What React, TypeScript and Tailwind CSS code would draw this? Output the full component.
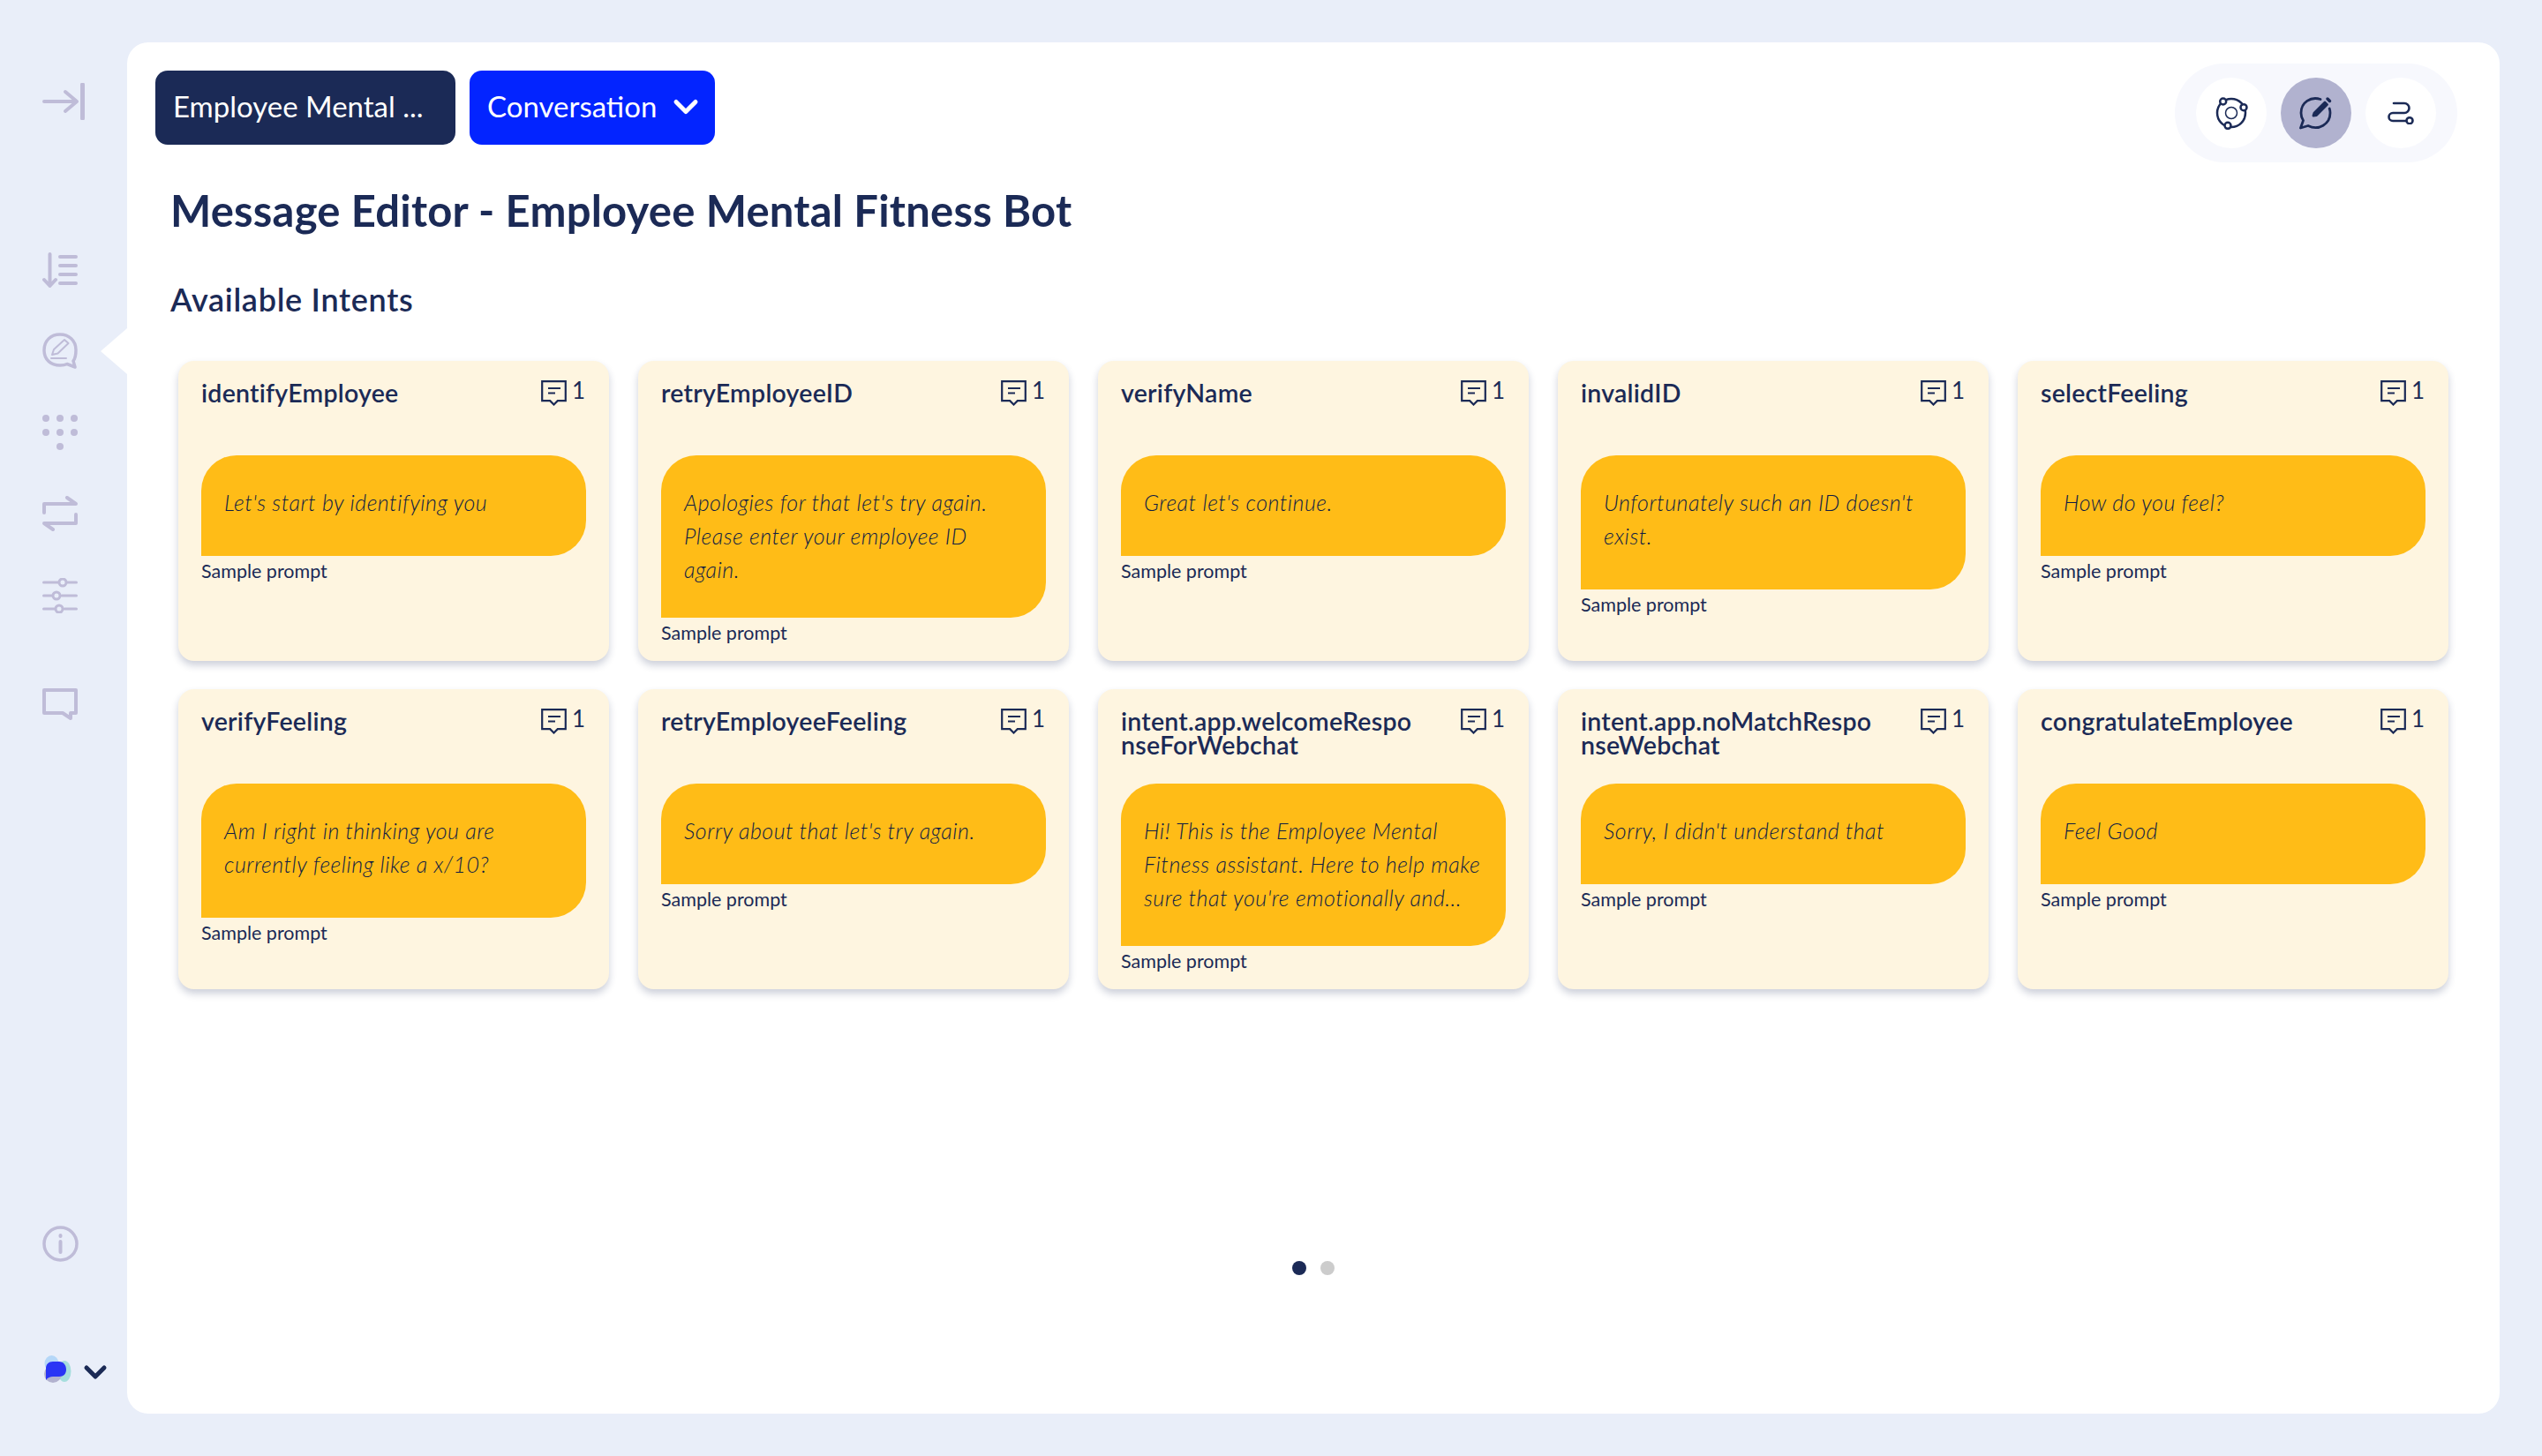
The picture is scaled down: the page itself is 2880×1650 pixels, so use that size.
import { ChevronDown } from "lucide-react";

const intents = [
  { name: "identifyEmployee", text: ["Let's start by identifying you"] },
  { name: "retryEmployeeID", text: ["Apologies for that let's try again.", "Please enter your employee ID", "again."] },
  { name: "verifyName", text: ["Great let's continue."] },
  { name: "invalidID", text: ["Unfortunately such an ID doesn't", "exist."] },
  { name: "selectFeeling", text: ["How do you feel?"] },
  { name: "verifyFeeling", text: ["Am I right in thinking you are", "currently feeling like a x/10?"] },
  { name: "retryEmployeeFeeling", text: ["Sorry about that let's try again."] },
  {
    name: "intent.app.welcomeResponseForWebchat",
    text: ["Hi! This is the Employee Mental", "Fitness assistant. Here to help make", "sure that you're emotionally and..."],
  },
  { name: "intent.app.noMatchResponseWebchat", text: ["Sorry, I didn't understand that"] },
  { name: "congratulateEmployee", text: ["Feel Good"] },
];

function CollapseIcon() {
  return (
    <svg width="48" height="42" viewBox="0 0 48 42" fill="none" stroke="#bfbcd8" strokeWidth="4" strokeLinecap="round" strokeLinejoin="round">
      <path d="M2 21h36M26 10l13 11-13 11" />
      <path d="M45.500 2v38" strokeWidth="5" />
    </svg>
  );
}

function ListIcon() {
  return (
    <svg width="40" height="41" viewBox="0 0 40 41" fill="none" stroke="#bfbcd8" strokeWidth="4" strokeLinecap="round" strokeLinejoin="round">
      <path d="M8.500 2v36M2 31l6.500 7 6.500-7" />
      <path d="M20 5h18M20 15h18M20 25h18M20 35h18" />
    </svg>
  );
}

function ChatEditIcon() {
  return (
    <svg width="40" height="41" viewBox="0 0 40 41" fill="none" stroke="#bfbcd8" strokeWidth="3.500" strokeLinecap="round" strokeLinejoin="round">
      <path d="M20 2C9.500 2 2 9 2 20s8 17 18 17c3 0 6-.5 8-1.500l9 3.500-2-7c2.500-3 3-7 3-12.500C38 9 30 2 20 2Z" />
      <path d="M11 25l2-6 12-11 4.500 4-12 11.500-6.500 1.500Z" strokeWidth="2" />
      <path d="M10 29h17" strokeWidth="2" />
    </svg>
  );
}

function DotsIcon() {
  return (
    <svg width="40" height="40" viewBox="0 0 40 40" fill="#bfbcd8">
      <ellipse cx="4" cy="4" rx="4" ry="4" />
      <ellipse cx="20" cy="4" rx="4" ry="4" />
      <ellipse cx="36" cy="4" rx="4" ry="4" />
      <ellipse cx="4" cy="20" rx="4" ry="4" />
      <ellipse cx="20" cy="20" rx="4" ry="4" />
      <ellipse cx="36" cy="20" rx="4" ry="4" />
      <ellipse cx="20" cy="36" rx="4" ry="4" />
    </svg>
  );
}

function RepeatIcon() {
  return (
    <svg width="40" height="40" viewBox="0 0 40 40" fill="none" stroke="#bfbcd8" strokeWidth="4" strokeLinecap="round" strokeLinejoin="round">
      <path d="M2 19V9h36L28 2" />
      <path d="M38 21v10H2l10 7" />
    </svg>
  );
}

function SlidersIcon() {
  return (
    <svg width="40" height="40" viewBox="0 0 40 40" fill="none" stroke="#bfbcd8" strokeWidth="3" strokeLinecap="round">
      <path d="M1.500 5h17M28 5h10.500M1.500 20h10M22 20h16.500M1.500 35h13M25 35h13.500" />
      <circle cx="23" cy="5" r="4" />
      <circle cx="16" cy="20" r="4" />
      <circle cx="19" cy="35" r="4" />
    </svg>
  );
}

function ChatIcon() {
  return (
    <svg width="40" height="37" viewBox="0 0 40 37" fill="none" stroke="#bfbcd8" strokeWidth="4" strokeLinejoin="round">
      <path d="M2 2h36v26h-6v6l-9-6H2V2Z" />
    </svg>
  );
}

function InfoIcon() {
  return (
    <svg width="41" height="41" viewBox="0 0 41 41" fill="none" stroke="#bfbcd8" strokeWidth="3.500" strokeLinecap="round">
      <circle cx="20.500" cy="20.500" r="18.500" />
      <path d="M20.500 18v12" strokeWidth="4" />
      <path d="M20.500 11v1" strokeWidth="4" />
    </svg>
  );
}

function BlobLogo() {
  return (
    <svg width="32" height="32" viewBox="0 0 32 32">
      <ellipse cx="9.500" cy="9" rx="8" ry="9" fill="#b5d7f8" />
      <ellipse cx="24" cy="18" rx="7.500" ry="12" fill="#a6dedd" />
      <circle cx="11" cy="21" r="10" fill="#b2b2cf" />
      <path d="M3 15C3 10 6 7 11 7h7c5 0 8 4 8 9s-3 8-8 8h-7c-3 0-6 1-8 4V15Z" fill="#2a35f5" />
    </svg>
  );
}

function OrbitIcon() {
  return (
    <svg width="38" height="38" viewBox="0 0 38 38" fill="none" stroke="#1b2a56" strokeWidth="2.500">
      <circle cx="19" cy="19" r="6.500" strokeWidth="1.500" />
      <circle cx="19" cy="19" r="16" />
      <circle cx="9.700" cy="6" r="3.500" fill="#fff" />
      <circle cx="33" cy="12.700" r="3.500" fill="#fff" />
      <circle cx="15" cy="33.300" r="3.500" fill="#fff" />
    </svg>
  );
}

function EditBubbleIcon() {
  return (
    <svg width="38" height="38" viewBox="0 0 38 38" fill="none" stroke="#1b2a56" strokeWidth="2.800" strokeLinecap="round" strokeLinejoin="round">
      <path d="M24 3.500C13 0 2 7 2 19c0 3 .8 6 2.500 8.500L1.500 36l8.500-2.500c12 6 25-2 25-14.500 0-2-.3-3.500-.8-5" />
      <path d="M16 22l1-3 12-12 2.500 2.500-12 12-3.500.5Z" fill="#1b2a56" />
      <path d="M32 3l2.500 2.500" strokeWidth="3.500" />
    </svg>
  );
}

function RouteIcon() {
  return (
    <svg width="30" height="26" viewBox="0 0 30 26" fill="none" stroke="#1b2a56" strokeWidth="2.600" strokeLinecap="round">
      <path d="M7 2h12a5.500 5.500 0 0 1 0 11H6a4.500 4.500 0 0 0 0 9h16" />
      <circle cx="25" cy="21.700" r="3.500" fill="#fff" />
    </svg>
  );
}

function CommentIcon() {
  return (
    <svg width="29" height="29" viewBox="0 0 29 29" fill="none" stroke="#1b2a56" strokeWidth="2.200">
      <path d="M1.200 1.200h26.600v22h-9l-4.300 4.300-4.300-4.300h-9V1.200Z" />
      <path d="M8 9h14M8 14.500h8" />
    </svg>
  );
}

function IntentCard({ name, text }: { name: string; text: string[] }) {
  return (
    <div className="h-[340px] rounded-[18px] bg-[#fef5e0] px-[26px] pt-[23px] shadow-[0_5px_9px_rgba(27,42,86,0.22)]">
      <div className="flex h-[84px] items-start justify-between">
        <div className="w-[336px] text-[28.500px] leading-[27px] font-semibold tracking-[0.25px] break-all text-[#1b2a56]">{name}</div>
        <div className="-mt-[1px] flex items-start gap-[6px] pr-[1px] text-[#1b2a56]">
          <CommentIcon />
          <span className="-mt-[2px] text-[26px] leading-[26px]">1</span>
        </div>
      </div>
      <div className="max-h-[184px] overflow-hidden rounded-[40px] rounded-bl-none bg-[#ffbc17] px-[26px] pt-[34px] pb-[42px] text-[25px] leading-[38px] font-light tracking-[0.5px] text-[#101c44] italic">
        {text.map((line) => (
          <div className="whitespace-nowrap" key={line}>
            {line}
          </div>
        ))}
      </div>
      <div className="mt-[5px] text-[21.500px] leading-[24px] text-[#1b2a56]">Sample prompt</div>
    </div>
  );
}

export default function App() {
  return (
    <div className="flex h-[1650px] w-[2880px] bg-[#e9eef9] py-[48px] pr-[48px] font-['Lato',sans-serif]">
      <aside className="relative flex w-[144px] shrink-0 flex-col pt-[46px] pl-[48px]">
        <CollapseIcon />
        <div className="mt-[150px]">
          <ListIcon />
        </div>
        <div className="mt-[50px]">
          <ChatEditIcon />
        </div>
        <div className="mt-[52px]">
          <DotsIcon />
        </div>
        <div className="mt-[52px]">
          <RepeatIcon />
        </div>
        <div className="mt-[53px]">
          <SlidersIcon />
        </div>
        <div className="mt-[85px]">
          <ChatIcon />
        </div>
        <div className="mt-auto mb-[172px]">
          <InfoIcon />
        </div>
        <div className="absolute top-[1481px] left-[49px] flex items-center gap-[7px]">
          <BlobLogo />
          <ChevronDown size={40} strokeWidth={3} className="mt-[6px] text-[#1b2a56]" />
        </div>
        <div className="absolute top-[324px] right-0 h-0 w-0 border-y-[26px] border-r-[30px] border-y-transparent border-r-white" />
      </aside>

      <main className="flex flex-1 flex-col rounded-[24px] bg-white pt-[32px] pr-[58px] pl-[32px]">
        <div className="flex items-start justify-between">
          <div className="flex gap-[16px]">
            <div className="flex h-[84px] w-[340px] items-center rounded-[14px] bg-[#1b2a56] pb-[2px] pl-[20px] text-[33px] text-white">
              Employee Mental ...
            </div>
            <div className="flex h-[84px] w-[278px] items-center gap-[11px] rounded-[14px] bg-[#0324ff] pb-[2px] pl-[20px] text-[33px] text-white">
              Conversation
              <ChevronDown size={44} strokeWidth={2.700} />
            </div>
          </div>
          <div className="-mt-[8px] -mr-[10px] flex h-[112px] w-[320px] items-center justify-center gap-[16px] rounded-full bg-[#f7f8fd]">
            <div className="flex h-[80px] w-[80px] items-center justify-center rounded-full bg-white">
              <OrbitIcon />
            </div>
            <div className="flex h-[80px] w-[80px] items-center justify-center rounded-full bg-[#b1b2cf]">
              <EditBubbleIcon />
            </div>
            <div className="flex h-[80px] w-[80px] items-center justify-center rounded-full bg-white">
              <RouteIcon />
            </div>
          </div>
        </div>

        <h1 className="mt-[24px] pl-[17px] text-[49px] leading-[60px] font-bold tracking-[0.2px] text-[#1b2a56]">
          Message Editor - Employee Mental Fitness Bot
        </h1>
        <h2 className="mt-[49px] pl-[17px] text-[36px] leading-[44px] font-semibold tracking-[0.7px] text-[#1b2a56]">
          Available Intents
        </h2>

        <div className="mt-[48px] ml-[26px] grid grid-cols-5 gap-x-[33px] gap-y-[32px]">
          {intents.map((item) => (
            <IntentCard key={item.name} name={item.name} text={item.text} />
          ))}
        </div>

        <div className="mt-[308px] flex justify-center gap-[16px] pl-[26px]">
          <div className="h-[16px] w-[16px] rounded-full bg-[#1b2a56]" />
          <div className="h-[16px] w-[16px] rounded-full bg-[#cccccc]" />
        </div>
      </main>
    </div>
  );
}
